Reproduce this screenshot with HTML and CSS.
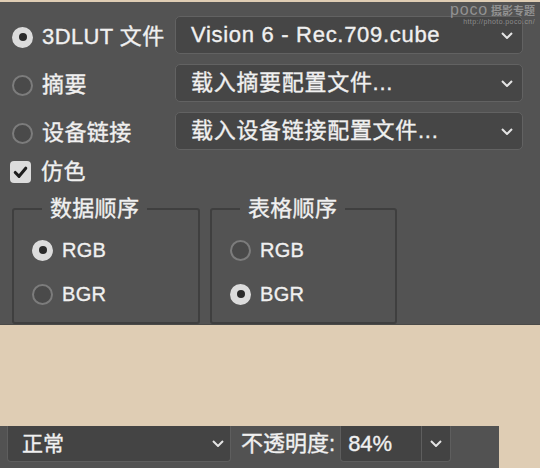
FILE: index.html
```html
<!DOCTYPE html>
<html lang="zh-CN">
<head>
<meta charset="utf-8">
<title>3DLUT</title>
<link rel="stylesheet" href="styles.css">
</head>
<body>
<div class="panel">
  <div class="row">
    <div class="opt"><span class="radio on"></span><span class="lbl">3DLUT 文件</span></div>
    <div class="select"><span class="val">Vision 6 - Rec.709.cube</span><svg class="chev" viewBox="0 0 12 7"><polyline points="1,1 6,6 11,1"/></svg></div>
  </div>
  <div class="row">
    <div class="opt"><span class="radio"></span><span class="lbl">摘要</span></div>
    <div class="select"><span class="val">载入摘要配置文件...</span><svg class="chev" viewBox="0 0 12 7"><polyline points="1,1 6,6 11,1"/></svg></div>
  </div>
  <div class="row">
    <div class="opt"><span class="radio"></span><span class="lbl">设备链接</span></div>
    <div class="select"><span class="val">载入设备链接配置文件...</span><svg class="chev" viewBox="0 0 12 7"><polyline points="1,1 6,6 11,1"/></svg></div>
  </div>
  <div class="check-row">
    <span class="checkbox"><svg viewBox="0 0 22 22"><polyline points="5.5,11.5 9.5,15.5 16.5,7"/></svg></span>
    <span class="lbl">仿色</span>
  </div>
  <div class="groups">
    <fieldset class="group">
      <legend>数据顺序</legend>
      <div class="gopt"><span class="radio on"></span><span>RGB</span></div>
      <div class="gopt"><span class="radio"></span><span>BGR</span></div>
    </fieldset>
    <fieldset class="group">
      <legend>表格顺序</legend>
      <div class="gopt"><span class="radio"></span><span>RGB</span></div>
      <div class="gopt"><span class="radio on"></span><span>BGR</span></div>
    </fieldset>
  </div>
  <div class="watermark">
    <div class="wm-top"><span class="wm-poco">poco</span><span class="wm-cn">摄影专题</span></div>
    <div class="wm-url">http://photo.poco.cn/</div>
  </div>
</div>
<div class="bar">
  <div class="blend"><span>正常</span><svg class="chev" viewBox="0 0 12 7"><polyline points="1,1 6,6 11,1"/></svg></div>
  <span class="op-label">不透明度:</span>
  <div class="op-input">
    <span class="op-value">84%</span>
    <span class="op-btn"><svg class="chev" viewBox="0 0 12 7"><polyline points="1,1 6,6 11,1"/></svg></span>
  </div>
</div>
</body>
</html>
```
FILE: styles.css
```css
* { box-sizing: border-box; }
html, body { margin: 0; padding: 0; }
body {
  width: 540px;
  height: 468px;
  overflow: hidden;
  background: #dfcdb4;
  font-family: "Liberation Sans", "Noto Sans CJK SC", sans-serif;
  color: #f0f0f0;
  font-size: 22px;
  line-height: 24px;
  -webkit-text-stroke: 0.35px #f0f0f0;
}
.panel {
  position: relative;
  margin-top: 2px;
  height: 323px;
  background: #535353;
  padding: 14px 17px 0 12px;
  border-bottom: 1px solid #4a4a48;
}
.row {
  display: flex;
  align-items: center;
  height: 38px;
  margin-bottom: 10px;
}
.opt {
  width: 163px;
  display: flex;
  align-items: center;
  gap: 9px;
  padding-top: 4px;
}
.lbl { letter-spacing: 0.4px; }
.radio {
  position: relative;
  flex: none;
  width: 21px;
  height: 21px;
  border-radius: 50%;
  background: #4a4a4a;
  border: 2px solid #7c7c7c;
}
.radio.on {
  background: #dcdcdc;
  border-color: #dcdcdc;
}
.radio.on::after {
  content: "";
  position: absolute;
  left: 4.5px;
  top: 4.5px;
  width: 8px;
  height: 8px;
  border-radius: 50%;
  background: #2b2b2b;
}
.select {
  width: 348px;
  height: 38px;
  display: flex;
  align-items: center;
  justify-content: space-between;
  background: #464646;
  border: 1px solid #626262;
  border-radius: 5px;
  padding: 0 9px 0 15px;
}
.val { letter-spacing: 0.7px; }
.chev {
  width: 12px;
  height: 7px;
  fill: none;
  stroke: #e4e4e4;
  stroke-width: 2;
  flex: none;
}
.check-row {
  display: flex;
  align-items: center;
  gap: 10px;
  margin-top: 3px;
  height: 24px;
}
.checkbox {
  flex: none;
  width: 21px;
  height: 22px;
  margin-left: -2px;
  border-radius: 4px;
  background: #dcdcdc;
  display: flex;
}
.checkbox svg {
  width: 21px;
  height: 22px;
  fill: none;
  stroke: #1e1e1e;
  stroke-width: 3.2;
  stroke-linecap: round;
  stroke-linejoin: round;
}
.groups {
  display: flex;
  gap: 10px;
  margin-top: 13px;
}
.group {
  margin: 0;
  width: 188px;
  height: 127px;
  border: 2px solid #3f3f3f;
  border-radius: 3px;
  padding: 7px 0 0 18px;
}
.group + .group { width: 187px; }
.group legend {
  margin-left: 10px;
  padding: 0 8px;
  font-size: 22px;
  line-height: 24px;
  letter-spacing: 0.3px;
}
.gopt {
  display: flex;
  align-items: center;
  gap: 9px;
  height: 44px;
  font-size: 20px;
  letter-spacing: 0.3px;
}
.watermark {
  position: absolute;
  right: 5px;
  top: 1px;
  color: rgba(200, 200, 200, 0.55);
  -webkit-text-stroke: 0;
  text-align: right;
}
.wm-top {
  display: flex;
  align-items: baseline;
  gap: 3px;
  line-height: 14px;
}
.wm-poco {
  font-size: 16px;
  letter-spacing: 0.8px;
}
.wm-cn {
  font-size: 11px;
  font-weight: bold;
}
.wm-url {
  font-size: 7px;
  line-height: 8px;
  letter-spacing: 0.4px;
}
.bar {
  margin-top: 101px;
  width: 499px;
  height: 42px;
  background: #525252;
  display: flex;
  align-items: flex-start;
  padding-left: 7px;
}
.blend {
  width: 224px;
  height: 36px;
  display: flex;
  align-items: center;
  justify-content: space-between;
  background: #444444;
  border: 1px solid #5e5e5e;
  border-top: none;
  border-radius: 0 0 4px 4px;
  padding: 0 6px 0 14px;
  font-size: 21px;
}
.op-label {
  margin-left: 10px;
  height: 36px;
  display: flex;
  align-items: center;
}
.op-input {
  margin-left: 5px;
  width: 111px;
  height: 36px;
  display: flex;
  background: #434343;
  border: 1px solid #5e5e5e;
  border-top: none;
  border-radius: 0 0 4px 4px;
}
.op-value {
  width: 81px;
  display: flex;
  align-items: center;
  padding-left: 7px;
  border-right: 1px solid #5e5e5e;
}
.op-btn {
  flex: 1;
  display: flex;
  align-items: center;
  justify-content: center;
}
```
